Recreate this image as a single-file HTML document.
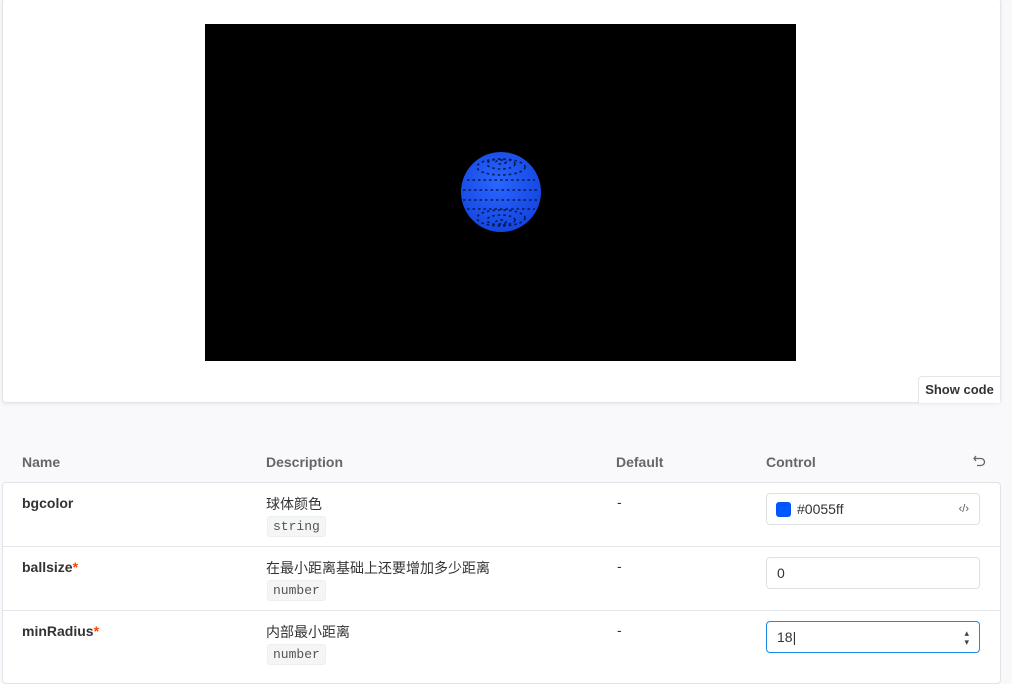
<!DOCTYPE html><html><head><meta charset="utf-8"><style>
body{margin:0;width:1012px;height:677px;overflow:hidden;background:#f9f9fb;font-family:"Liberation Sans","Noto Sans CJK SC",sans-serif;color:#333;position:relative}
.card{position:absolute;left:2px;top:-2px;width:997px;height:403px;background:#fff;border:1px solid #e3e5e8;border-radius:4px;box-shadow:0 1px 3px rgba(0,0,0,.08)}
.canvas{position:absolute;left:205px;top:24px;width:591px;height:337px;background:#000}
.show{position:absolute;left:918px;top:376px;width:81px;height:26px;border:1px solid #e3e5e8;border-bottom:none;border-right:none;background:#fff;font-size:13px;font-weight:bold;color:#333;text-align:center;line-height:26px;border-radius:4px 0 0 0}
.h{position:absolute;top:454px;font-size:14px;font-weight:bold;color:#666}
.tbl{position:absolute;left:2px;top:482px;width:997px;height:200px;background:#fff;border:1px solid #dfe3e8;border-radius:4px}
.row{position:absolute;left:0;width:997px;border-top:1px solid #e3e7ec}
.n{position:absolute;font-size:14px;font-weight:bold;color:#333}
.d{position:absolute;font-size:14px;color:#333}
.t{position:absolute;font-family:"Liberation Mono",monospace;font-size:13px;background:#f4f5f6;border:1px solid #eee;border-radius:3px;padding:2px 5px;color:#555}
.inp{position:absolute;left:766px;width:212px;height:30px;border:1px solid #dde1e5;border-radius:4px;background:#fff;font-size:14px;line-height:30px}
.r{color:#ff4400}
</style></head><body>
<div class="card"></div>
<div class="canvas"><svg width="591" height="337"><defs><radialGradient id="g" cx="45%" cy="40%" r="60%"><stop offset="0" stop-color="#2a66ff"/><stop offset="1" stop-color="#1446e0"/></radialGradient></defs>
<circle cx="296" cy="168" r="40" fill="url(#g)"/>
<g fill="none" stroke="#001040" stroke-width="1.6" stroke-dasharray="2.5 3" opacity=".85">
<ellipse cx="296" cy="140" rx="14" ry="5"/><ellipse cx="296" cy="143" rx="24" ry="8"/><ellipse cx="296" cy="196" rx="14" ry="5"/><ellipse cx="296" cy="194" rx="24" ry="8"/>
<line x1="262" y1="156" x2="330" y2="156"/><line x1="258" y1="166" x2="334" y2="166"/><line x1="258" y1="176" x2="334" y2="176"/><line x1="262" y1="185" x2="330" y2="185"/>
<ellipse cx="296" cy="198" rx="5" ry="2"/><ellipse cx="296" cy="138" rx="5" ry="2"/></g></svg></div>
<div class="show">Show code</div>
<div class="h" style="left:22px">Name</div><div class="h" style="left:266px">Description</div><div class="h" style="left:616px">Default</div><div class="h" style="left:766px">Control</div>
<svg style="position:absolute;left:972px;top:454px" width="15" height="14" viewBox="0 0 15 14"><path d="M4 2 L2 4.5 L4 7 M2 4.5 H9 A3.5 3.5 0 0 1 9 11.5 H5" fill="none" stroke="#666" stroke-width="1.3"/></svg>
<div class="tbl">
<div class="row" style="top:63px"></div><div class="row" style="top:127px"></div>
</div>
<div class="n" style="left:22px;top:495px">bgcolor</div>
<div class="d" style="left:266px;top:494px">球体颜色</div><div class="t" style="left:267px;top:516px">string</div>
<div class="d" style="left:617px;top:494px">-</div>
<div class="inp" style="top:493px"><span style="position:absolute;left:9px;top:8px;width:15px;height:15px;background:#0055ff;border-radius:3px"></span><span style="position:absolute;left:30px">#0055ff</span><span style="position:absolute;right:10px;font-size:11px;color:#555">‹/›</span></div>
<div class="n" style="left:22px;top:559px">ballsize<span class="r">*</span></div>
<div class="d" style="left:266px;top:558px">在最小距离基础上还要增加多少距离</div><div class="t" style="left:267px;top:580px">number</div>
<div class="d" style="left:617px;top:558px">-</div>
<div class="inp" style="top:557px"><span style="position:absolute;left:10px">0</span></div>
<div class="n" style="left:22px;top:623px">minRadius<span class="r">*</span></div>
<div class="d" style="left:266px;top:622px">内部最小距离</div><div class="t" style="left:267px;top:644px">number</div>
<div class="d" style="left:617px;top:622px">-</div>
<div class="inp" style="top:621px;border:1px solid #1e88e5"><span style="position:absolute;left:10px">18|</span><span style="position:absolute;right:10px;font-size:9px;line-height:9px;top:7px;color:#444">▴<br>▾</span></div>
</body></html>
